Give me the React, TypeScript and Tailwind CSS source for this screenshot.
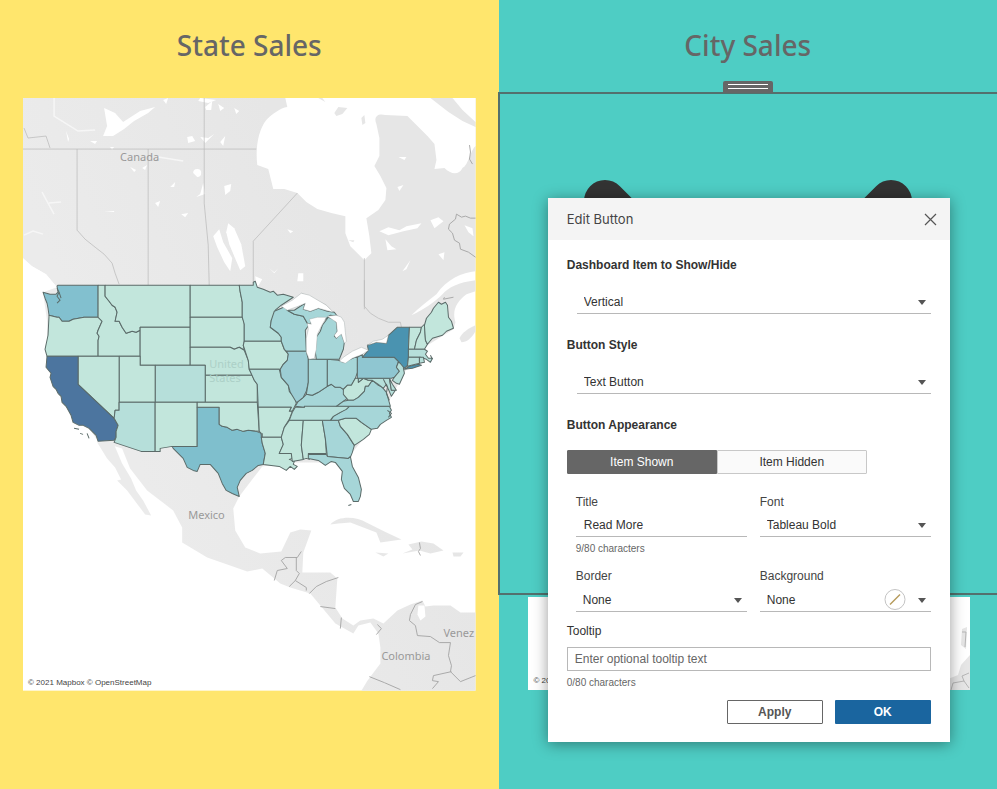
import { useId, useState, type ReactNode } from "react";

const BASE = "#c2e6dc";
const LOW = "#b6dfda";
const MID = "#a6d6d8";

type StateShape = { id: string; fill: string; d: string };

const STATES: StateShape[] = [
  { id: "WA", fill: "#82c0cf", d: "M43 292L50 294 56 294 58 292 57 286 58 285H98V317H92L84 317 73 319 69 321 62 321 59 317 57 317 49 315 48 308 47 303 45 298Z" },
  { id: "OR", fill: BASE, d: "M49 315L57 317 59 317 62 321 69 321 73 319 84 317 98 317 102 321 98 330 97 333 99 336 98 340V356H47L45 349 48 335Z" },
  { id: "ID", fill: BASE, d: "M98 285H105V296L109 301 112 305 115 307 117 312 115 321 119 321 122 327 126 333 132 331 136 332 140 330V356H98V340L99 336 97 333 98 330 102 321 98 317Z" },
  { id: "MT", fill: BASE, d: "M105 285H190V327H140V330L136 332 132 331 126 333 122 327 119 321 115 321 117 312 115 307 112 305 109 301 105 296Z" },
  { id: "WY", fill: BASE, d: "M140 327H190V365H140Z" },
  { id: "ND", fill: BASE, d: "M190 285H239L240 292 242 302 242 317H190Z" },
  { id: "SD", fill: BASE, d: "M190 317H242L244 322V341L243 345 244 350 239 347 234 349 230 347H190Z" },
  { id: "NE", fill: BASE, d: "M190 347H230L234 349 239 347 244 350 248 360 249 369 252 375H205V365H190Z" },
  { id: "KS", fill: BASE, d: "M205 375H252L254 380 257 384V402H205Z" },
  { id: "CO", fill: LOW, d: "M155 365H205V402H155Z" },
  { id: "UT", fill: BASE, d: "M119 356H140V365H155V402H119Z" },
  { id: "NV", fill: BASE, d: "M78 356H119V410H115L114 418 78 384Z" },
  { id: "CA", fill: "#4c759f", d: "M47 356H78V384L114 418 118 425 116 431 116 437 114 440 98 441 96 435 89 428 83 425 79 425 73 422 71 415 66 406 62 402 61 396 58 393 56 389 53 386 50 377 51 373 46 367Z" },
  { id: "AZ", fill: LOW, d: "M119 402H155V451H141L114 442 116 437 116 431 118 425 114 418 115 410H119Z" },
  { id: "NM", fill: BASE, d: "M155 402H197V446H172L160 448V451H155Z" },
  { id: "TX", fill: "#7fbfcd", d: "M197 407H219V424L222 426 227 427 232 430 237 429 243 431 248 430 256 431 261 433 262 443 265 453 263 464 258 465 252 470 246 473 240 480 237 487 239 496 232 493 226 490 222 483 218 473 210 464 200 464 197 471 193 470 187 467 183 458 173 448 172 446H197Z" },
  { id: "OK", fill: BASE, d: "M197 402H257L258 417 259 431 248 430 243 431 237 429 232 430 227 427 222 426 219 424V407H197Z" },
  { id: "MN", fill: LOW, d: "M239 285H253V282L255 281 257 287 263 289 270 292 273 291 277 295 283 294 293 297 281 305 275 310 274 317 271 320 270 327 278 333 281 337V341H244V324L242 317 242 302 240 292Z" },
  { id: "IA", fill: BASE, d: "M244 341H281L284 349 288 354 287 360 283 364 280 369H249L248 360 243 345Z" },
  { id: "MO", fill: LOW, d: "M249 369H279L281 377 288 385 289 391 295 398 296 403 292 411 289 411 291 407H258L257 384 254 380Z" },
  { id: "AR", fill: BASE, d: "M258 407H291L289 411 292 411 289 419 284 427 281 437H261L261 433 259 431Z" },
  { id: "LA", fill: BASE, d: "M261 437H281L283 444 279 453H291L292 458 289 459 294 461 293 464 297 466 294 469 290 466 286 470 279 466 271 465 263 464 265 453 262 443Z" },
  { id: "MS", fill: BASE, d: "M289 420H303L301 445 303 459 292 461 291 453H279L283 444 281 437 284 427Z" },
  { id: "AL", fill: BASE, d: "M303 420H322L325 438 326 453H308L309 459 306 458 303 459 301 445Z" },
  { id: "GA", fill: MID, d: "M322 420H338L340 426 347 434 354 445 352 452 350 457 348 458 327 456 325 438Z" },
  { id: "FL", fill: MID, d: "M308 454H326L327 456 348 458 350 456 352 466 358 477 361 489 360 496 358 501 353 501 350 494 344 488 341 479 342 471 335 462 331 461 325 465 318 460 308 458Z" },
  { id: "SC", fill: BASE, d: "M338 420L345 418 356 418 361 422 371 429 369 434 363 439 354 445 347 434 340 426Z" },
  { id: "NC", fill: MID, d: "M349 406H389L391 410 389 413 391 417 386 420 380 424 377 428 371 429 361 422 356 418 345 418 338 420H330L333 416 340 412Z" },
  { id: "TN", fill: LOW, d: "M295 407H304V405L349 406 346 409 340 412 333 416 330 420H289L292 412Z" },
  { id: "KY", fill: MID, d: "M295 406L298 401 303 397 306 394 312 395 318 392 321 390 327 386 331 384 335 387 340 387 343 389 347 398 336 406H304V407Z" },
  { id: "WI", fill: MID, d: "M274 311L281 308 285 306 287 310 294 314 303 316 307 323 309 324 305 330 306 351H286L284 349 281 341 281 337 278 333 270 327 271 320Z" },
  { id: "IL", fill: "#9ccdd4", d: "M286 351H306L308 359V382L306 391 303 397 298 401 296 402 290 392 288 385 281 377 280 369 283 364 287 360 288 354Z" },
  { id: "IN", fill: MID, d: "M308 359H327V386L321 390 318 392 312 395 306 394 308 382Z" },
  { id: "OH", fill: MID, d: "M327 359L338 360 343 362 350 359 357 356V372L355 378 351 385 347 385 343 389 340 387 335 387 331 384 327 386Z" },
  { id: "MI-L", fill: MID, d: "M316 359L315 352 316 337 320 331 322 325 328 317 333 319 336 322 337 331 334 336 336 338 341 333 344 342 343 349 339 359Z" },
  { id: "MI-U", fill: MID, d: "M287 310L294 310 300 306 305 303 303 309 310 311 318 308 327 311 334 312 337 316 330 315 325 319 314 319 309 324 307 323 303 316 294 314Z" },
  { id: "WV", fill: BASE, d: "M343 389L347 385 351 385 355 378 358 378 358 382 363 378 368 380 372 380 368 386 365 386 364 391 358 397 353 400 348 400 343 394Z" },
  { id: "VA", fill: MID, d: "M336 406L343 401 348 400 353 400 358 397 364 391 365 386 368 386 372 380 378 385 382 387 386 392 388 399 390 406Z" },
  { id: "MD", fill: LOW, d: "M358 378H389L391 390 395 390 391 396 388 389 386 384 383 388 378 384 372 380 368 380 363 378 358 382Z" },
  { id: "DE", fill: LOW, d: "M389 378L392 384 396 390H391Z" },
  { id: "PA", fill: "#8fc6d1", d: "M357 357L362 354V357H394L398 361 396 367 399 371 394 377 391 378H357Z" },
  { id: "NJ", fill: LOW, d: "M398 362L403 364 403 368 404 373 399 384 396 383 392 380 394 377 399 371 396 367Z" },
  { id: "NY", fill: "#4a93b0", d: "M362 357L368 350 367 345 376 342 386 343 388 335 397 327H409L408 349V357L407 365 404 368 398 361 394 357Z" },
  { id: "LI", fill: "#4a93b0", d: "M404 369L409 366 418 364 421 365 412 368Z" },
  { id: "VT", fill: BASE, d: "M409 327H421L420 332 416 340 414 349H408Z" },
  { id: "NH", fill: BASE, d: "M421 327L424 324 425 340 427 344 424 349H414L416 340 420 332Z" },
  { id: "ME", fill: BASE, d: "M424 325L426 318 431 312 433 308 438 302 441 304 445 302 447 305 448 317 451 321 453 328 446 331 442 335 432 338 427 344 425 340Z" },
  { id: "MA", fill: LOW, d: "M408 349H424L427 351 425 354 428 358 432 358 430 362 426 359 420 357H408Z" },
  { id: "CT", fill: LOW, d: "M408 357H419V363L407 366Z" },
  { id: "RI", fill: LOW, d: "M419 357H423L424 362 419 363Z" },
];

const LAND: string[] = [
  // Canada and the continental interior
  "M23 98H475V271C462 272 446 279 436 294C427 301 418 308 411 315C424 309 434 302 442 294C448 287 458 282 475 280V291L466 294C457 301 451 309 455 322L453 329 427 345 404 372 392 395 370 430 352 452 340 462H290L262 466 239 496 233 508 235 530 245 547 260 553 281 551 290 532 300 529 311 530 303 552 302 572 330 572 337 578 335 607 342 618 353 625 360 620 373 618 383 623 397 610 410 604 422 600 425 606 433 605 450 605 460 612 475 612V690H361L367 680 380 663V647L378 633 370 622 358 625 353 633 335 623 320 605 310 593 290 587 280 583 262 568 247 571 207 557 182 542V527L173 510 147 490 130 468 122 448 98 441 47 368V320L43 292 57 287 46 274 32 266 23 258Z",
  "M97 442L113 442 122 463 131 478 136 490 143 500 151 515 145 514 139 506 127 490 117 480 121 479 115 467 107 458Z",
  "M330 524C338 515 356 516 366 522L384 531 401 539 380 542 376 532 350 522 338 523Z",
  "M408 544L421 541 433 543 443 550 430 553 419 550 402 553 412 549Z",
  "M375 552L388 553 383 556Z",
  "M452 552H463L460 556H453Z",
  "M459 338C462 332 468 328 475 325V331C471 338 466 342 461 342Z",
];

const WATER: string[] = [
  // Hudson Bay and Arctic straits
  "M285 98H318L325 102 322 98H400L405 101 385 98H475V122L462 110 452 98H430L448 112 462 121 475 127V146C470 150 468 165 462 168C458 176 450 174 444 168L434 169 436 160 434 144 427 136 418 127 407 116 385 115C377 113 373 117 376 124L379 138 379 156 374 166 380 176 386 188 385 200 378 210 366 218 369 236 371 253 364 260 350 246 345 233 345 216 331 213 317 209 306 202 297 193 284 189 273 189 268 169 257 165C255 148 258 130 266 120C272 114 280 108 287 107Z",
  "M104 108L115 113 123 122 140 111 155 107 148 113 134 121 124 129 113 136 103 136 107 126Z",
  "M228 223L234 228 241 244 245 266 240 270 234 256 229 244 226 232Z",
  "M213 236L219 229 223 242 232 258 230 271 224 262 217 247Z",
  "M205 194L203 183 200 194 196 197Z",
  "M205 107L212 101 211 110 206 110ZM218 104L224 108 220 111ZM234 108L239 111 236 114Z",
  "M187 137L192 136 195 141 188 143ZM200 137L208 138 214 134 205 143ZM220 142L225 136 223 146Z",
  "M224 186L231 184 230 191 225 195ZM193 173A4 4 0 1 1 197 177ZM170 187L175 182 174 187ZM155 203L160 201 158 207ZM181 214L188 213 185 217ZM104 211H114V212Z",
  "M66 131L69 139 68 142ZM90 141H97L95 144ZM110 147H114L112 150ZM130 167L136 170 134 172ZM142 168L147 165 145 170Z",
  "M255 276L262 279 259 284 256 288Z",
  "M298 273H303V281H297ZM269 268L274 272 278 268 274 273ZM287 229L293 231 290 233Z",
  "M379 231L388 227 399 230 406 226 421 223 417 228 403 231 388 235ZM385 239L391 246 396 249 387 250ZM402 271L410 260 406 269ZM398 157L406 157 404 160ZM397 187L403 185 399 191ZM430 220L438 217 443 221 434 228ZM438 254L444 252 443 260ZM464 225L472 228 473 236 468 232Z",
  "M200 98L216 100 208 103 198 101ZM163 100L168 98 166 104Z",
];

const LAKES: string[] = [
  "M281 306L292 300 301 293 309 295 326 305 333 312 318 308 310 311 303 309 305 303 298 306 287 310Z",
  "M307 323L311 324 309 319 317 317 326 317 321 326 317 334 316 349 314 358 309 359 306 352 306 338 308 329Z",
  "M327 316L336 315 341 317 344 322 345 332 346 341 344 343 341 334 336 338 334 335 337 331 336 322Z",
  "M339 361L343 357 352 351 361 347 368 350 362 354 352 358 345 363Z",
  "M367 345L373 341 382 339 388 335 386 343 376 342Z",
];

const BORDERS: string[] = [
  "M77 149V230L85 239 95 247 104 254 112 263 115 273 119 284",
  "M148 149V285M204 98L204 203 208 245 209 285M23 149H256",
  "M297 193L253 241V282M364 258V309",
  "M364 280L364 306 370 313 378 318 388 322 400 322 401 327",
  "M24 128L28 138 46 136 50 148",
  "M301 293L310 297 326 305 330 309",
];

const LATIN_BORDERS: string[] = [
  "M274 580L277 570 287 568 281 560 285 557H297L301 551M296 557V570L299 573 295 580 289 586M295 580L306 587 306 590M309 593L316 586 326 581 338 577",
  "M320 606L335 608M341 617L340 628M377 624L381 628 376 634",
  "M422 601L415 604 410 614 409 620 415 625 417 635 430 636 439 642 450 642 448 655 451 665 450 671 460 681 475 675M451 671L433 675 432 680 438 681 432 688M369 676L384 682 400 689",
  "M475 218L470 218 465 216 461 217 456 214 455 219 449 224 448 229 452 233 454 240 459 243 460 249 468 252 475 257",
  "M469 145L470 152 469 159 472 164M444 297L443 299 453 297M419 542L420 548 418 551 420 555",
];

function SalesMap() {
  const land = useId();
  return (
    <svg viewBox="23 98 452 592" className="block w-full" role="img" aria-label="State sales map">
      <defs>
        <linearGradient id={land} gradientUnits="userSpaceOnUse" x1="60" y1="280" x2="300" y2="180">
          <stop offset="0" stopColor="#ebebeb" />
          <stop offset="1" stopColor="#e6e6e6" />
        </linearGradient>
      </defs>
      <rect x="23" y="98" width="452" height="592" fill="#ffffff" />
      <g fill={`url(#${land})`}>{LAND.map((d) => <path key={d} d={d} />)}</g>
      <g fill="#ffffff">{WATER.map((d) => <path key={d} d={d} />)}</g>
      <path fill="#ffffff" d="M23 258L32 266 46 274 56 286 43 292 23 292Z" />
      <path fill="#e6e6e6" d="M334 113L338 107 347 108 342 114 336 116ZM361 118L364 115 365 123 362 125ZM348 240L354 240 353 242Z" />
      <path fill="none" stroke="#f6f6f6" strokeWidth="1.5" d="M42 192L54 214M49 203L61 202M54 98V116L78 131 95 130M24 235L33 231 43 234M158 157L183 161" />
      <g fill="none" stroke="#b8b8b8" strokeWidth="0.7">{BORDERS.map((d) => <path key={d} d={d} />)}</g>
      <g fill="none" stroke="#a3a3a3" strokeWidth="0.9">{LATIN_BORDERS.map((d) => <path key={d} d={d} />)}</g>
      <path fill="#ffffff" d="M418 605L424 605 425 616 420 620 417 614Z" />
      <g stroke="#5b6b69" strokeWidth="1" strokeLinejoin="round">
        {STATES.map((s) => <path key={s.id} d={s.d} fill={s.fill} />)}
      </g>
      <g fill="#ffffff" stroke="#9aa5a4" strokeWidth="0.4">{LAKES.map((d) => <path key={d} d={d} />)}</g>
      <g fill="none" stroke="#5b6b69" strokeWidth="1">
        <path d="M57 288L59 292 57 296 60 300 57 303M59 292L61 298M383 379L387 387 386 393 389 400M387 410L391 413 388 417M74 428L79 429M80 433L83 434M87 433L89 438M348 505L351 504M430 355L432 359M262 433L262 437" />
      </g>
      <g fontFamily='"Noto Sans", "Open Sans", sans-serif' fontSize="11" fill="#999999">
        <text x="120" y="161">Canada</text>
        <text x="188" y="519">Mexico</text>
        <text x="381" y="659">Colombia</text>
        <text x="443" y="636">Venez</text>
        <g fill="#acd0c7"><text x="209" y="368">United</text><text x="209" y="382">States</text></g>
      </g>
      <text x="28" y="684" fontFamily='"Liberation Sans", Arial, sans-serif' fontSize="8" fill="#444444">© 2021 Mapbox © OpenStreetMap</text>
    </svg>
  );
}

function CityMapStrip() {
  return (
    <div className="mr-[27px] ml-[29px] mt-[2px] flex h-[93px] items-end justify-between bg-white pl-[6px]">
      <p className="pb-1 text-[8px] leading-[10px] text-[#444]">© 20</p>
      <svg width="22" height="93" viewBox="0 0 22 93" aria-hidden="true">
        <path fill="#e6e6e6" d="M14 32L19 30 18 52 13 48ZM22 58L13 68 10 78 0 82V93H22Z" />
        <path fill="none" stroke="#aaaaaa" strokeWidth="0.8" d="M14 35H18L17 50M3 93L5 86 16 84 14 79 21 76M16 84L21 91" />
      </svg>
    </div>
  );
}

type SelectFieldProps = {
  id: string;
  options: string[];
  children?: ReactNode;
};

function SelectField({ id, options, children }: SelectFieldProps) {
  return (
    <div className="relative">
      <select id={id} className="block h-6 w-full appearance-none rounded-none border-b border-[#b8b8b8] bg-transparent pl-[7px] text-[12px] leading-4 text-[#333] outline-none">
        {options.map((o) => <option key={o}>{o}</option>)}
      </select>
      <div className="pointer-events-none absolute inset-y-0 right-[5px] flex items-center gap-3">
        {children}
        <svg width="8" height="5" viewBox="0 0 8 5" aria-hidden="true"><path d="M0 0H8L4 5Z" fill="#555555" /></svg>
      </div>
    </div>
  );
}

function EditButtonDialog() {
  const uid = useId();
  const [tab, setTab] = useState<"shown" | "hidden">("shown");
  const [title, setTitle] = useState("Read More");
  const [tip, setTip] = useState("");
  const heading = "block text-[12px] leading-4 font-bold text-[#333]";
  const label = "block text-[12px] leading-4 text-[#444]";
  const on = "bg-[#666] border-[#666] text-white";
  const off = "bg-[#fafafa] border-[#c8c8c8] text-[#333]";

  return (
    <div role="dialog" aria-labelledby={uid + "h"} className="w-[402px] bg-white shadow-[0_2px_14px_rgba(0,0,0,0.4)]">
      <header className="flex h-[42px] items-center justify-between bg-[#f4f4f4] pr-[13px] pl-[19px]">
        <h2 id={uid + "h"} className="font-[Inter,sans-serif] text-[13px] leading-4 text-[#444]">Edit Button</h2>
        <button type="button" aria-label="Close">
          <svg width="13" height="13" viewBox="0 0 13 13" aria-hidden="true"><path d="M1 1L12 12M12 1L1 12" stroke="#555555" strokeWidth="1.2" fill="none" /></svg>
        </button>
      </header>
      <form className="px-[19px] pt-[17px] pb-[18px]" onSubmit={(e) => e.preventDefault()}>
        <label htmlFor={uid + "i"} className={heading}>Dashboard Item to Show/Hide</label>
        <div className="mt-[17px] ml-[10px]"><SelectField id={uid + "i"} options={["Vertical"]} /></div>
        <label htmlFor={uid + "s"} className={heading + " mt-[23px]"}>Button Style</label>
        <div className="mt-[17px] ml-[10px]"><SelectField id={uid + "s"} options={["Text Button", "Image Button"]} /></div>
        <h3 className={heading + " mt-[23px]"}>Button Appearance</h3>
        <div className="mt-[17px] flex w-[300px]">
          <button type="button" aria-pressed={tab === "shown"} onClick={() => setTab("shown")} className={"h-6 flex-1 rounded-l-[1px] border text-[12px] leading-4 " + (tab === "shown" ? on : off)}>Item Shown</button>
          <button type="button" aria-pressed={tab === "hidden"} onClick={() => setTab("hidden")} className={"h-6 flex-1 rounded-r-[1px] border text-[12px] leading-4 " + (tab === "hidden" ? on : off)}>Item Hidden</button>
        </div>
        <div className="mt-5 ml-[9px] grid grid-cols-2 gap-x-[13px]">
          <div>
            <label htmlFor={uid + "t"} className={label}>Title</label>
            <input id={uid + "t"} maxLength={80} value={title} onChange={(e) => setTitle(e.target.value)} className="mt-[3px] block h-6 w-full border-b border-[#b8b8b8] pl-2 text-[12px] leading-4 text-[#333] outline-none" />
            <p className="mt-[6px] text-[10px] leading-3 text-[#666]">{title.length}/80 characters</p>
          </div>
          <div>
            <label htmlFor={uid + "f"} className={label}>Font</label>
            <div className="mt-[3px]"><SelectField id={uid + "f"} options={["Tableau Bold", "Tableau Book"]} /></div>
          </div>
        </div>
        <div className="mt-[13px] ml-[9px] grid grid-cols-2 gap-x-[13px]">
          <div>
            <label htmlFor={uid + "b"} className={label}>Border</label>
            <div className="mt-1"><SelectField id={uid + "b"} options={["None"]} /></div>
          </div>
          <div>
            <label htmlFor={uid + "g"} className={label}>Background</label>
            <div className="mt-1">
              <SelectField id={uid + "g"} options={["None"]}>
                <svg width="22" height="22" viewBox="0 0 22 22" aria-hidden="true">
                  <circle cx="11" cy="10.5" r="10" fill="#ffffff" stroke="#c4c4c4" />
                  <path d="M6 15.500L16 5.500" stroke="#b59a5b" strokeWidth="1.4" />
                </svg>
              </SelectField>
            </div>
          </div>
        </div>
        <label htmlFor={uid + "p"} className="mt-[11px] block text-[12px] leading-4 text-[#333]">Tooltip</label>
        <input id={uid + "p"} maxLength={80} value={tip} onChange={(e) => setTip(e.target.value)} placeholder="Enter optional tooltip text" className="mt-2 block h-6 w-full border border-[#b8b8b8] px-[7px] text-[12px] leading-4 text-[#333] outline-none placeholder:text-[#666]" />
        <p className="mt-[6px] text-[10px] leading-3 text-[#666]">{tip.length}/80 characters</p>
        <div className="mt-[11px] flex justify-end gap-3">
          <button type="button" className="h-6 w-24 rounded-[1px] border border-[#666] bg-white text-[12px] leading-4 font-bold text-[#555]">Apply</button>
          <button type="submit" className="h-6 w-24 rounded-[1px] bg-[#1a659f] text-[12px] leading-4 font-bold text-white">OK</button>
        </div>
      </form>
    </div>
  );
}

function PanelTitle({ children }: { children: ReactNode }) {
  return <h1 className="text-center font-['Noto_Sans','Open_Sans',sans-serif] text-[28px] leading-[34px] font-medium text-[#666]">{children}</h1>;
}

export default function App() {
  return (
    <main className="grid min-h-screen grid-cols-2 overflow-hidden font-['Liberation_Sans',Arial,sans-serif]">
      <section className="bg-[#ffe66d] px-[23px] pt-7">
        <PanelTitle>State Sales</PanelTitle>
        <div className="mt-9"><SalesMap /></div>
      </section>
      <section className="relative bg-[#4ecdc4] pt-7">
        <PanelTitle>City Sales</PanelTitle>
        <div className="mt-[19px] flex justify-center">
          <div className="flex h-3 w-[50px] flex-col items-center gap-[3px] rounded-t-[2px] bg-[#666] pt-[3px]">
            <span className="h-px w-10 bg-white" />
            <span className="h-px w-10 bg-white" />
          </div>
        </div>
        <div className="-mt-px -mr-[2px] -ml-px h-[503px] border-2 border-[#53706d] pt-[86px]">
          <svg className="mx-auto block" width="328" height="328" viewBox="0 0 328 328" aria-hidden="true">
            <path d="M21 21L307 307M307 21L21 307" stroke="#333333" strokeWidth="42" strokeLinecap="round" />
          </svg>
        </div>
        <CityMapStrip />
        <div className="absolute inset-x-0 top-[198px] flex justify-center pl-[2px]"><EditButtonDialog /></div>
      </section>
    </main>
  );
}
